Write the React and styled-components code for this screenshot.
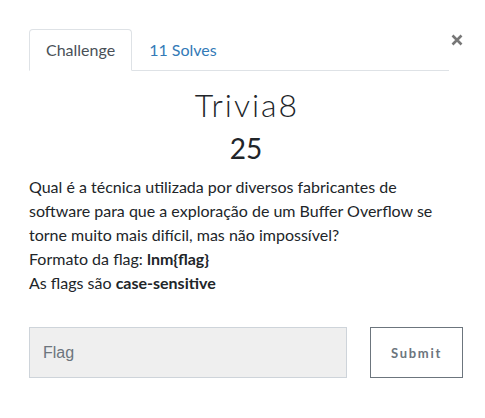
import React from "react";
import styled, { createGlobalStyle } from "styled-components";

const Global = createGlobalStyle`
  html, body { margin: 0; padding: 0; background: #fff; }
  body { font-family: Lato, "Open Sans", sans-serif; color: #212529; }
  * { box-sizing: border-box; }
`;

const Modal = styled.div`
  width: 485px;
  height: 418px;
  padding: 29px 22px 0 29px;
  display: flex;
  flex-direction: column;
`;

const Header = styled.div`
  display: flex;
  align-items: flex-start;
`;

const Tabs = styled.ul`
  list-style: none;
  margin: 0;
  padding: 0;
  display: flex;
  flex: 1;
  border-bottom: 1px solid #dee2e6;
`;

const Tab = styled.li`
  margin-bottom: -1px;
  padding: 8px 16px;
  font-size: 16px;
  line-height: 24px;
  border: 1px solid ${(p) => (p.$active ? "#dee2e6" : "transparent")};
  border-bottom-color: ${(p) => (p.$active ? "#fff" : "transparent")};
  border-radius: 4px 4px 0 0;
  background: ${(p) => (p.$active ? "#fff" : "transparent")};
  color: ${(p) => (p.$active ? "#495057" : "#337ab7")};
`;

const Close = styled.button`
  border: 0;
  background: none;
  padding: 0;
  margin: 5px 0 0 2px;
  width: 12px;
  height: 12px;
  display: flex;
`;

const Title = styled.h2`
  margin: 12px 0 0;
  text-align: center;
  font-weight: 300;
  font-size: 32px;
  letter-spacing: 2px;
  text-indent: 2px;
  line-height: 44px;
  color: #212529;
`;

const Value = styled.h3`
  margin: 3px 0 0;
  text-align: center;
  font-weight: 400;
  font-size: 28px;
  line-height: 36px;
`;

const Desc = styled.div`
  margin-top: 9px;
  max-width: 420px;
  font-size: 16px;
  line-height: 24px;
  color: #212529;
  p { margin: 0; }
  b { font-weight: 700; }
`;

const Row = styled.form`
  display: flex;
  gap: 23px;
  margin-top: 32px;
  width: 434px;
`;

const Input = styled.input`
  flex: 1;
  height: 51px;
  padding: 0 13px;
  background: #efefef;
  border: 1px solid #ced4da;
  font-family: "Liberation Sans", Arial, sans-serif;
  font-size: 16px;
  color: #495057;
  outline: none;
  &::placeholder { color: #6c757d; }
`;

const Submit = styled.button`
  width: 93px;
  height: 51px;
  background: #fff;
  border: 1px solid #6c757d;
  font-family: Lato, sans-serif;
  font-weight: 700;
  font-size: 13px;
  letter-spacing: 1.7px;
  color: #6c757d;
`;

export default function App() {
  return (
    <>
      <Global />
      <Modal>
        <Header>
          <Tabs>
            <Tab $active>Challenge</Tab>
            <Tab>11 Solves</Tab>
          </Tabs>
          <Close aria-label="Close">
            <svg width="12" height="12" viewBox="0 0 12 12">
              <path d="M1.5 1.5 L10.5 10.5 M10.5 1.5 L1.5 10.5" stroke="#777" strokeWidth="2.6" strokeLinecap="butt" />
            </svg>
          </Close>
        </Header>
        <Title>Trivia8</Title>
        <Value>25</Value>
        <Desc>
          <p>
            Qual é a técnica utilizada por diversos fabricantes de software para que a exploração de um
            Buffer Overflow se torne muito mais difícil, mas não impossível?
          </p>
          <p>
            Formato da flag: <b>lnm{"{flag}"}</b>
          </p>
          <p>
            As flags são <b>case-sensitive</b>
          </p>
        </Desc>
        <Row onSubmit={(e) => e.preventDefault()}>
          <Input placeholder="Flag" />
          <Submit type="submit">Submit</Submit>
        </Row>
      </Modal>
    </>
  );
}
